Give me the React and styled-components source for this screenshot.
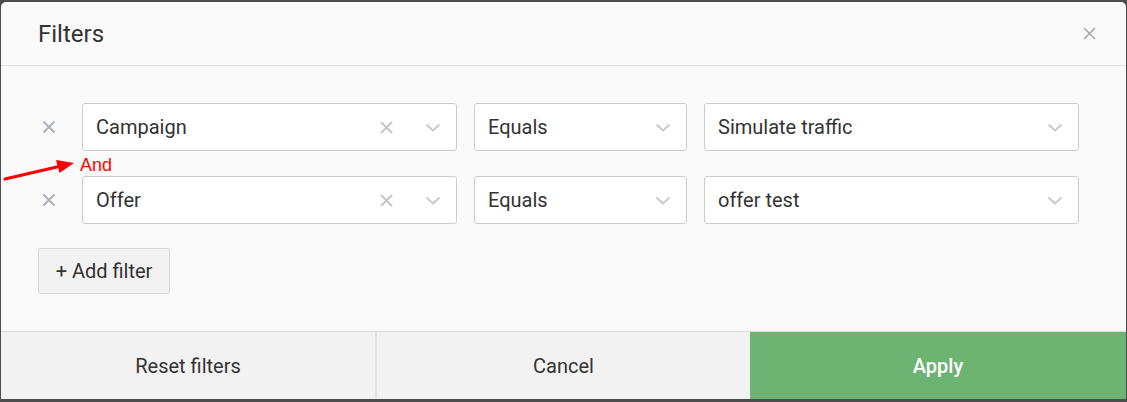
import React from 'react';
import styled, { createGlobalStyle } from 'styled-components';

const GlobalStyle = createGlobalStyle`
  html, body {
    margin: 0;
    padding: 0;
    background: #4d4d4d;
  }
  body {
    font-family: Roboto, "Liberation Sans", sans-serif;
    color: #333;
  }
`;

const filters = [
  { field: 'Campaign', op: 'Equals', value: 'Simulate traffic' },
  { field: 'Offer', op: 'Equals', value: 'offer test' },
];

export default function App() {
  return (
    <Page>
      <GlobalStyle />
      <Modal>
        <Header>
          <Title>Filters</Title>
          <CloseBtn aria-label="close">
            <svg width="13" height="13" viewBox="0 0 13 13">
              <path d="M1 1L12 12M12 1L1 12" stroke="#a8a8a8" strokeWidth="1.6" />
            </svg>
          </CloseBtn>
        </Header>
        <Body>
          {filters.map((f, i) => (
            <React.Fragment key={i}>
              {i > 0 && <Connector>And</Connector>}
              <FilterRow>
                <RemoveBtn>
                  <svg width="14" height="12" viewBox="0 0 14 12">
                    <path d="M1.5 0.5L12.5 11.5M12.5 0.5L1.5 11.5" stroke="#a9afb7" strokeWidth="1.9" />
                  </svg>
                </RemoveBtn>
                <Select $w={375}>
                  <SelectText>{f.field}</SelectText>
                  <ClearIcon />
                  <Chevron />
                </Select>
                <Select $w={213}>
                  <SelectText>{f.op}</SelectText>
                  <Chevron />
                </Select>
                <Select $w={375}>
                  <SelectText>{f.value}</SelectText>
                  <Chevron />
                </Select>
              </FilterRow>
            </React.Fragment>
          ))}
          <AddButton>+ Add filter</AddButton>
          <Arrow width="80" height="30" viewBox="0 0 80 30">
            <path d="M2 27L56 14.5" stroke="#f00" strokeWidth="3.2" strokeLinecap="round" />
            <path d="M71 11L53 8L56.5 21Z" fill="#f00" />
          </Arrow>
        </Body>
        <Footer>
          <FooterButton>Reset filters</FooterButton>
          <FooterButton>Cancel</FooterButton>
          <FooterButton $primary>Apply</FooterButton>
        </Footer>
      </Modal>
    </Page>
  );
}

function ClearIcon() {
  return (
    <IconBox $mr={32}>
      <svg width="13" height="13" viewBox="0 0 13 13">
        <path d="M1 1L12 12M12 1L1 12" stroke="#c8c8c8" strokeWidth="2.2" />
      </svg>
    </IconBox>
  );
}

function Chevron() {
  return (
    <IconBox $mr={15}>
      <svg width="16" height="9" viewBox="0 0 16 9">
        <path d="M1.5 1.5L8 7.5L14.5 1.5" stroke="#c8c8c8" strokeWidth="2" fill="none" />
      </svg>
    </IconBox>
  );
}

const Page = styled.div`
  padding: 2px 1px 3px 1px;
`;

const Modal = styled.div`
  width: 1125px;
  height: 397px;
  background: #fafafa;
  border-radius: 5px 5px 0 0;
  overflow: hidden;
  display: flex;
  flex-direction: column;
`;

const Header = styled.div`
  height: 63px;
  border-bottom: 1px solid #e0e0e0;
  display: flex;
  align-items: center;
  justify-content: space-between;
  padding: 0 30px 0 37px;
`;

const Title = styled.h2`
  margin: 0;
  font-size: 24px;
  font-weight: 400;
  color: #333;
`;

const CloseBtn = styled.button`
  border: 0;
  background: transparent;
  padding: 0;
  display: flex;
  cursor: pointer;
`;

const Body = styled.div`
  position: relative;
  flex: 1;
  padding: 37px 47px 0 37px;
`;

const FilterRow = styled.div`
  display: flex;
  align-items: center;
  gap: 17px;
`;

const RemoveBtn = styled.button`
  width: 22px;
  margin-right: 5px;
  border: 0;
  background: transparent;
  padding: 0;
  display: flex;
  justify-content: center;
  cursor: pointer;
`;

const Select = styled.div`
  box-sizing: border-box;
  width: ${(p) => p.$w}px;
  height: 48px;
  background: #fff;
  border: 1px solid #ccc;
  border-radius: 3px;
  display: flex;
  align-items: center;
  padding-left: 13px;
`;

const SelectText = styled.span`
  flex: 1;
  font-size: 20px;
  color: #333;
`;

const IconBox = styled.span`
  display: flex;
  margin-right: ${(p) => p.$mr}px;
`;

const Connector = styled.div`
  height: 25px;
  padding-left: 42px;
  font-family: "Liberation Sans", Arial, sans-serif;
  font-size: 18px;
  line-height: 28px;
  color: #f00;
`;

const AddButton = styled.button`
  display: block;
  margin-top: 24px;
  margin-left: 0;
  width: 132px;
  height: 46px;
  background: #f2f2f2;
  border: 1px solid #d9d9d9;
  border-radius: 3px;
  font-family: Roboto, sans-serif;
  font-size: 20px;
  color: #333;
  cursor: pointer;
`;

const Arrow = styled.svg`
  position: absolute;
  left: 2px;
  top: 86px;
`;

const Footer = styled.div`
  display: grid;
  grid-template-columns: 374px 375px 1fr;
  border-top: 1px solid #ddd;
  height: 67px;
`;

const FooterButton = styled.button`
  border: 0;
  border-left: ${(p) => (p.$primary ? '0' : '2px solid #e2e2e2')};
  &:first-child {
    border-left: 0;
  }
  background: ${(p) => (p.$primary ? '#6db372' : '#f2f2f2')};
  color: ${(p) => (p.$primary ? '#fff' : '#333')};
  font-family: Roboto, sans-serif;
  font-size: 20px;
  font-weight: ${(p) => (p.$primary ? 500 : 400)};
  cursor: pointer;
`;
